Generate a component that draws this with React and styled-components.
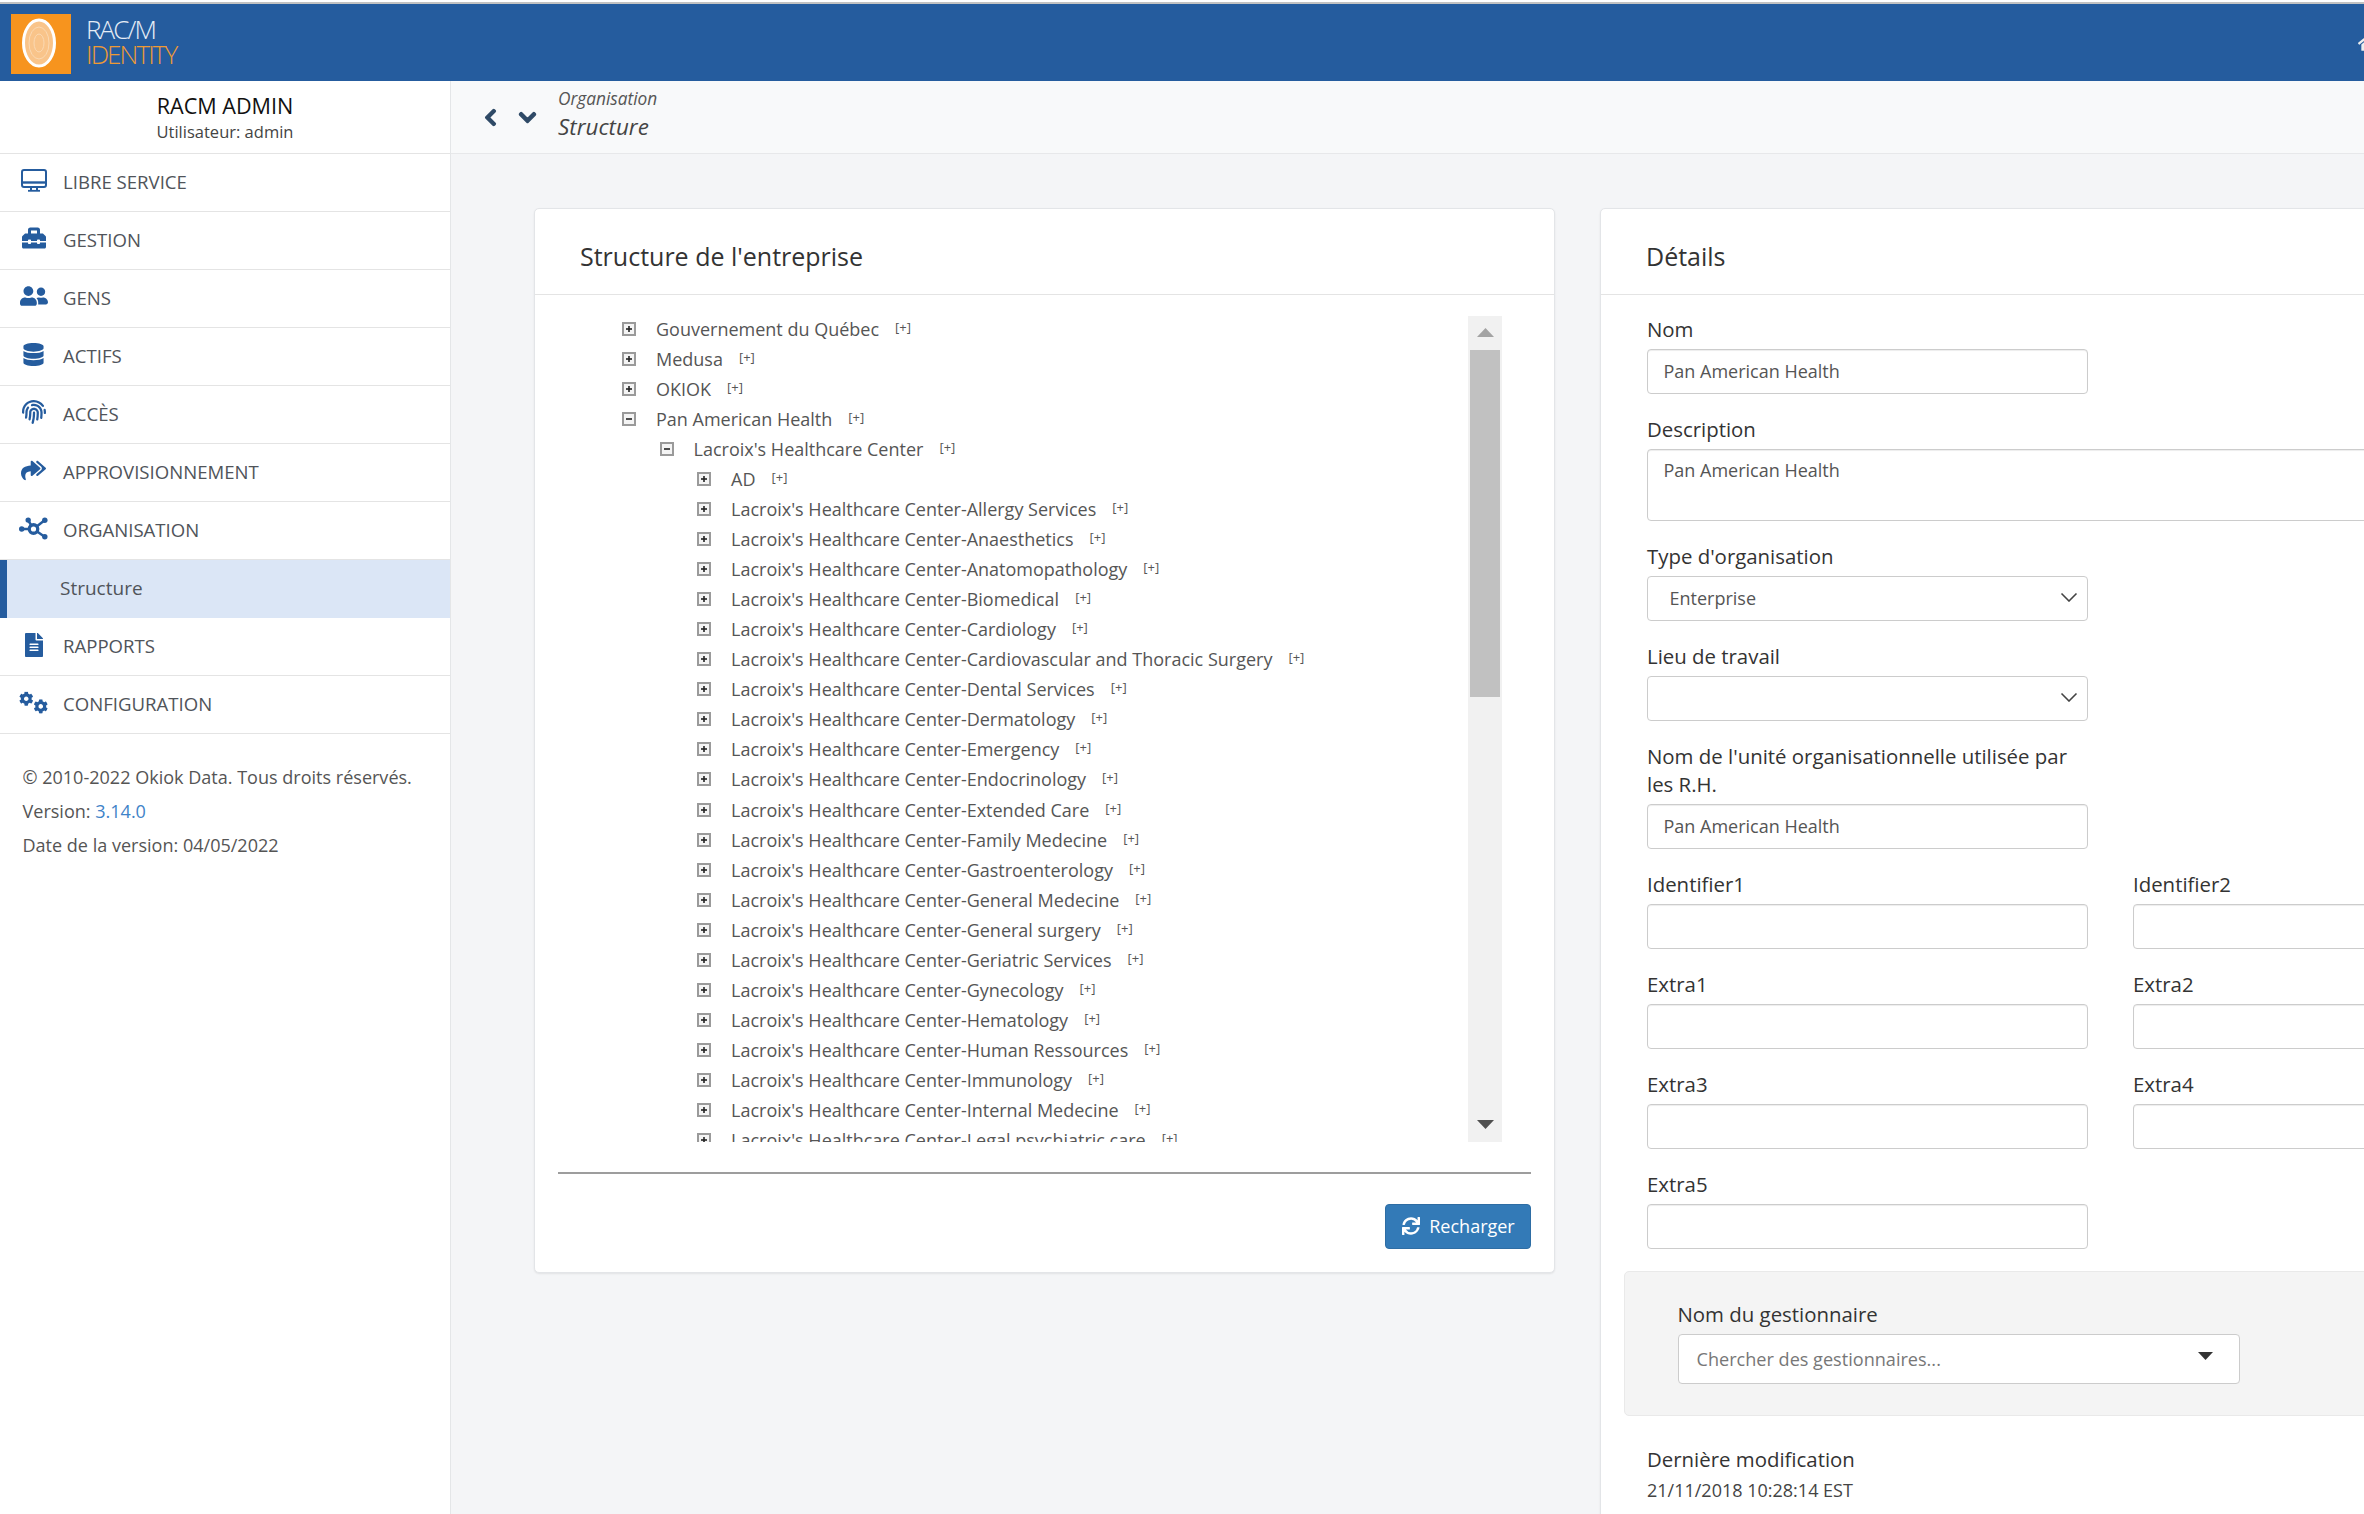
import styled, { createGlobalStyle } from "styled-components";
import {
  FaToolbox, FaUserFriends, FaDatabase, FaFingerprint, FaReplyAll,
  FaFileAlt, FaCog, FaChevronLeft, FaChevronDown, FaHome, FaSync,
} from "react-icons/fa";

const GlobalStyle = createGlobalStyle`
  html, body {
    margin: 0;
    padding: 0;
    width: 2364px;
    height: 1514px;
    overflow: hidden;
    background: #fff;
    font-family: "Open Sans", "Liberation Sans", sans-serif;
    font-size: 18px;
    color: #333;
  }
  * { box-sizing: border-box; }
`;

const blue = "#255c9e";

const Page = styled.div`
  width: 2364px;
  height: 1514px;
  overflow: hidden;
  display: flex;
  flex-direction: column;
`;

const TopBar = styled.header`
  height: 81px;
  flex: none;
  background: ${blue};
  border-top: 2px solid #fff;
  display: flex;
  align-items: center;
  justify-content: space-between;
  box-shadow: inset 0 2px 0 #c2c2c2;
  padding: 4px 0 0 11px;
`;

const Logo = styled.div`
  display: flex;
  align-items: center;
  gap: 15px;
`;

const LogoMark = styled.svg`
  width: 60px;
  height: 60px;
  display: block;
`;

const LogoText = styled.div`
  display: flex;
  flex-direction: column;
  font-weight: 300;
  font-size: 26px;
  line-height: 25px;
  letter-spacing: -1.9px;
  margin-top: -4px;
`;

const LogoLine = styled.span`
  color: ${(p) => p.$color};
`;

const HomeIcon = styled(FaHome)`
  font-size: 20px;
  color: #eee;
  margin-right: -14px;
  margin-top: -1px;
`;

const Body = styled.div`
  flex: 1;
  display: flex;
  min-height: 0;
`;

const Sidebar = styled.aside`
  width: 451px;
  flex: none;
  background: #fff;
  border-right: 1px solid #e4e6e8;
`;

const UserBox = styled.div`
  height: 72.5px;
  border-bottom: 1px solid #e4e4e4;
  text-align: center;
  padding-top: 11px;
`;

const UserName = styled.div`
  font-size: 21.6px;
  line-height: 28px;
  color: #111;
`;

const UserLogin = styled.div`
  font-size: 16.5px;
  line-height: 24px;
  color: #444;
`;

const NavRow = styled.div`
  height: 58.1px;
  display: flex;
  align-items: center;
  border-bottom: 1px solid #e4e4e4;
  font-size: 18.6px;
  font-weight: 500;
  color: #50545a;
  padding: 0 0 2px 19px;
`;

const NavIcon = styled.span`
  width: 29px;
  height: 26px;
  margin-right: 15px;
  margin-top: -2px;
  display: flex;
  align-items: center;
  justify-content: center;
  color: ${blue};
  font-size: ${(p) => p.$size || 24}px;
  transform: ${(p) => (p.$flip ? "scaleX(-1)" : "none")};
`;

const NavChild = styled.div`
  height: 58.1px;
  display: flex;
  align-items: center;
  background: #dbe6f6;
  border-left: 7px solid ${blue};
  padding: 0 0 3px 53px;
  font-size: 19px;
  color: #50545a;
`;

const SideFooter = styled.div`
  padding: 25.5px 22.5px 0;
  font-size: 18.05px;
  color: #555;
`;

const FooterLine = styled.div`
  height: 34px;
  line-height: 34px;
`;

const VersionLink = styled.a`
  color: #3f83c8;
`;

const Main = styled.main`
  flex: 1;
  min-width: 0;
  background: #f4f5f7;
`;

const Crumbs = styled.div`
  height: 72.5px;
  background: #f8f9fa;
  border-bottom: 1px solid #e7e8ea;
  display: flex;
  align-items: center;
  padding-left: 30px;
`;

const CrumbArrow = styled.span`
  display: flex;
  color: #2f4a66;
  font-size: ${(p) => p.$size}px;
  margin-right: ${(p) => p.$gap}px;
  margin-top: 1px;

  svg {
    stroke: currentColor;
    stroke-width: 36px;
  }
`;

const CrumbText = styled.div`
  font-style: italic;
  color: #555;
  margin-top: -6px;
`;

const CrumbTop = styled.div`
  font-size: 17.3px;
  line-height: 26px;
`;

const CrumbBottom = styled.div`
  font-size: 22.4px;
  line-height: 29px;
  color: #444;
`;

const Content = styled.div`
  display: flex;
  align-items: flex-start;
  gap: 45px;
  padding: 54px 0 0 83px;
`;

const Card = styled.section`
  flex: none;
  width: ${(p) => p.$width}px;
  background: #fff;
  border: 1px solid #e3e5e8;
  border-radius: 5px;
  box-shadow: 0 1px 2px rgba(0, 0, 0, 0.08);
`;

const CardHead = styled.h2`
  margin: 0;
  height: 86px;
  border-bottom: 1px solid #e4e4e4;
  padding-left: 45px;
  font-size: 25px;
  font-weight: 500;
  line-height: 94px;
  color: #333;
`;

const TreeBody = styled.div`
  padding: 21px 23px 23px;
`;

const TreeFrame = styled.div`
  display: flex;
  height: 826px;
  padding-right: 29px;
`;

const TreeList = styled.div`
  flex: 1;
  overflow: hidden;
  padding-left: 64px;
`;

const TreeRow = styled.div`
  height: 30.07px;
  display: flex;
  align-items: flex-start;
  padding-left: ${(p) => p.$level * 37.5}px;
  font-size: 18px;
  line-height: 26px;
  color: #555;
  white-space: nowrap;
`;

const TreeToggle = styled.svg`
  width: 14px;
  height: 14px;
  flex: none;
  margin: 6px 20px 0 0;
`;

const TreeAdd = styled.span`
  font-size: 13px;
  line-height: 22px;
  margin-left: 16px;
  color: #555;
`;

const Scrollbar = styled.div`
  width: 34px;
  flex: none;
  background: #f1f1f1;
  display: flex;
  flex-direction: column;
  align-items: center;
`;

const ScrollButton = styled.div`
  height: ${(p) => p.$height}px;
  flex: none;
  display: flex;
  align-items: center;
  justify-content: center;
`;

const ScrollArrow = styled.svg`
  width: 17px;
  height: 9px;
  display: block;
`;

const ScrollThumb = styled.div`
  width: 30px;
  height: 347px;
  flex: none;
  background: #c1c1c1;
`;

const ScrollRest = styled.div`
  flex: 1;
`;

const Rule = styled.hr`
  margin: 30px 0 0;
  border: 0;
  border-top: 2px solid #9d9d9d;
`;

const CardActions = styled.div`
  display: flex;
  justify-content: flex-end;
  margin-top: 30px;
`;

const ReloadButton = styled.button`
  height: 45px;
  width: 146px;
  border: 1px solid #2e6da4;
  border-radius: 4px;
  background: #337ab7;
  color: #fff;
  font: inherit;
  font-size: 18px;
  display: flex;
  align-items: center;
  justify-content: center;
  gap: 9px;
  padding: 0 0 0 1px;
`;

const DetailsBody = styled.div`
  padding: 21px 0 60px 46px;
`;

const FormRow = styled.div`
  display: flex;
  gap: 45px;
`;

const Field = styled.div`
  width: ${(p) => p.$width || 441}px;
  flex: none;
  margin-bottom: 22px;
`;

const Label = styled.label`
  display: block;
  font-size: 20.4px;
  font-weight: 500;
  line-height: 28px;
  margin: -1px 0 6px;
  color: #333;
`;

const Input = styled.input`
  display: block;
  width: 100%;
  height: 45px;
  border: 1px solid #ccc;
  border-radius: 4px;
  padding: 0 15.5px;
  font: inherit;
  font-size: 18px;
  color: #555;
  background: #fff;
  box-shadow: inset 0 1px 1px rgba(0, 0, 0, 0.075);
  outline: none;
`;

const TextArea = styled.textarea`
  display: block;
  width: 100%;
  height: 72px;
  border: 1px solid #ccc;
  border-radius: 4px;
  padding: 8px 15.5px;
  font: inherit;
  font-size: 18px;
  line-height: 25px;
  color: #555;
  background: #fff;
  box-shadow: inset 0 1px 1px rgba(0, 0, 0, 0.075);
  outline: none;
  resize: none;
`;

const SelectBox = styled.div`
  height: 45px;
  border: 1px solid #ccc;
  border-radius: 4px;
  background: #fff;
  display: flex;
  align-items: center;
  justify-content: space-between;
  padding: 0 9px 0 21.5px;
  font-size: 18px;
  color: #555;
`;

const Chevron = styled.svg`
  width: 18px;
  height: 10px;
  display: block;
  margin-top: -3px;
`;

const ManagerPanel = styled.div`
  margin: 1px 0 0 -23px;
  width: 1000px;
  height: 145px;
  background: #f4f4f4;
  border: 1px solid #e9e9e9;
  border-radius: 5px;
  padding: 29px 0 0 52.5px;
`;

const ManagerSelect = styled.div`
  width: 562.5px;
  height: 50px;
  border: 1px solid #ccc;
  border-radius: 4px;
  background: #fff;
  display: flex;
  align-items: center;
  justify-content: space-between;
  padding: 0 26px 0 18px;
  font-size: 18.1px;
  color: #777;
`;

const Caret = styled.svg`
  width: 15px;
  height: 8px;
  display: block;
  margin-top: -5px;
`;

const Stamp = styled.div`
  margin-top: 30px;
`;

const StampValue = styled.div`
  font-size: 18px;
  line-height: 28px;
  margin-top: -3px;
  color: #444;
`;

const departments = [
  "Allergy Services", "Anaesthetics", "Anatomopathology", "Biomedical", "Cardiology",
  "Cardiovascular and Thoracic Surgery", "Dental Services", "Dermatology", "Emergency",
  "Endocrinology", "Extended Care", "Family Medecine", "Gastroenterology", "General Medecine",
  "General surgery", "Geriatric Services", "Gynecology", "Hematology", "Human Ressources",
  "Immunology", "Internal Medecine", "Legal psychiatric care",
];

const treeRows = [
  { level: 0, name: "Gouvernement du Québec" },
  { level: 0, name: "Medusa" },
  { level: 0, name: "OKIOK" },
  { level: 0, name: "Pan American Health", open: true },
  { level: 1, name: "Lacroix's Healthcare Center", open: true },
  { level: 2, name: "AD" },
  ...departments.map((d) => ({ level: 2, name: `Lacroix's Healthcare Center-${d}` })),
];

const DesktopIcon = () => (
  <svg width="26" height="23" viewBox="0 0 26 23" fill="none" stroke="currentColor">
    <rect x="1" y="1" width="24" height="17" rx="2" strokeWidth="2" />
    <path d="M1 13.5h24" strokeWidth="2.4" />
    <path d="M10 18v3M16 18v3" strokeWidth="2" />
    <path d="M7 21.8h12" strokeWidth="1.8" />
  </svg>
);

const OrgIcon = () => (
  <svg width="30" height="24" viewBox="0 0 30 24" fill="currentColor">
    <g stroke="currentColor" strokeWidth="2.6">
      <line x1="15" y1="12" x2="3" y2="12" />
      <line x1="15" y1="12" x2="9.5" y2="3" />
      <line x1="15" y1="12" x2="26.5" y2="3" />
      <line x1="15" y1="12" x2="26.5" y2="20" />
    </g>
    <circle cx="15" cy="12" r="4.4" fill="#fff" stroke="currentColor" strokeWidth="3.4" />
    <circle cx="2.8" cy="12" r="2.8" />
    <circle cx="9.5" cy="2.8" r="2.8" />
    <circle cx="26.7" cy="3" r="2.8" />
    <circle cx="26.7" cy="20" r="2.8" />
  </svg>
);

const CogsIcon = () => (
  <svg width="30" height="24" viewBox="0 0 30 24" fill="currentColor">
    <FaCog x="0" y="0" size="15" />
    <FaCog x="15" y="8" size="15" />
  </svg>
);

const navTop = [
  { label: "LIBRE SERVICE", icon: <DesktopIcon /> },
  { label: "GESTION", icon: <FaToolbox /> },
  { label: "GENS", icon: <FaUserFriends />, size: 28 },
  { label: "ACTIFS", icon: <FaDatabase />, size: 23 },
  { label: "ACCÈS", icon: <FaFingerprint /> },
  { label: "APPROVISIONNEMENT", icon: <FaReplyAll />, flip: true, size: 25 },
  { label: "ORGANISATION", icon: <OrgIcon /> },
];

const navBottom = [
  { label: "RAPPORTS", icon: <FaFileAlt /> },
  { label: "CONFIGURATION", icon: <CogsIcon /> },
];

const Toggle = ({ open }) => (
  <TreeToggle viewBox="0 0 14 14">
    <rect x="1" y="1" width="12" height="12" fill="#f4f4f4" stroke="#9a9a9a" strokeWidth="2" />
    <path d="M4 7h6" stroke="#222" strokeWidth="1.6" />
    {!open && <path d="M7 4v6" stroke="#222" strokeWidth="1.6" />}
  </TreeToggle>
);

const Nav = ({ item }) => (
  <NavRow>
    <NavIcon $size={item.size} $flip={item.flip}>{item.icon}</NavIcon>
    {item.label}
  </NavRow>
);

const SelectChevron = () => (
  <Chevron viewBox="0 0 18 10">
    <path d="M1.5 1.5 9 9l7.5-7.5" fill="none" stroke="#444" strokeWidth="1.6" />
  </Chevron>
);

const TextField = ({ label, value = "" }) => (
  <Field>
    <Label>{label}</Label>
    <Input defaultValue={value} readOnly />
  </Field>
);

export default function App() {
  return (
    <Page>
      <GlobalStyle />
      <TopBar>
        <Logo>
          <LogoMark viewBox="0 0 60 60">
            <rect width="60" height="60" fill="#f7941e" />
            <ellipse cx="28" cy="29" rx="15.5" ry="23" fill="#f9c48a" stroke="#fff" strokeWidth="3" />
            <ellipse cx="28" cy="29" rx="10" ry="16" fill="none" stroke="#fbd9b2" strokeWidth="1" />
            <ellipse cx="28" cy="29" rx="5" ry="9" fill="none" stroke="#fbd9b2" strokeWidth="1" />
          </LogoMark>
          <LogoText>
            <LogoLine $color="#e6edf6">RAC/M</LogoLine>
            <LogoLine $color="#ee9a35">IDENTITY</LogoLine>
          </LogoText>
        </Logo>
        <HomeIcon />
      </TopBar>
      <Body>
        <Sidebar>
          <UserBox>
            <UserName>RACM ADMIN</UserName>
            <UserLogin>Utilisateur: admin</UserLogin>
          </UserBox>
          {navTop.map((item) => <Nav key={item.label} item={item} />)}
          <NavChild>Structure</NavChild>
          {navBottom.map((item) => <Nav key={item.label} item={item} />)}
          <SideFooter>
            <FooterLine>© 2010-2022 Okiok Data. Tous droits réservés.</FooterLine>
            <FooterLine>Version: <VersionLink>3.14.0</VersionLink></FooterLine>
            <FooterLine>Date de la version: 04/05/2022</FooterLine>
          </SideFooter>
        </Sidebar>
        <Main>
          <Crumbs>
            <CrumbArrow $size={19} $gap={18}><FaChevronLeft /></CrumbArrow>
            <CrumbArrow $size={19} $gap={21}><FaChevronDown /></CrumbArrow>
            <CrumbText>
              <CrumbTop>Organisation</CrumbTop>
              <CrumbBottom>Structure</CrumbBottom>
            </CrumbText>
          </Crumbs>
          <Content>
            <Card $width={1021}>
              <CardHead>Structure de l'entreprise</CardHead>
              <TreeBody>
                <TreeFrame>
                  <TreeList>
                    {treeRows.map((row) => (
                      <TreeRow key={row.name} $level={row.level}>
                        <Toggle open={row.open} />
                        {row.name}
                        <TreeAdd>[+]</TreeAdd>
                      </TreeRow>
                    ))}
                  </TreeList>
                  <Scrollbar>
                    <ScrollButton $height={34}>
                      <ScrollArrow viewBox="0 0 17 9"><path d="M8.5 0 17 9H0z" fill="#a3a3a3" /></ScrollArrow>
                    </ScrollButton>
                    <ScrollThumb />
                    <ScrollRest />
                    <ScrollButton $height={34}>
                      <ScrollArrow viewBox="0 0 17 9"><path d="M0 0h17L8.5 9z" fill="#505050" /></ScrollArrow>
                    </ScrollButton>
                  </Scrollbar>
                </TreeFrame>
                <Rule />
                <CardActions>
                  <ReloadButton><FaSync />Recharger</ReloadButton>
                </CardActions>
              </TreeBody>
            </Card>
            <Card $width={1100}>
              <CardHead>Détails</CardHead>
              <DetailsBody>
                <TextField label="Nom" value="Pan American Health" />
                <Field $width={927}>
                  <Label>Description</Label>
                  <TextArea defaultValue="Pan American Health" readOnly />
                </Field>
                <Field>
                  <Label>Type d'organisation</Label>
                  <SelectBox>Enterprise<SelectChevron /></SelectBox>
                </Field>
                <Field>
                  <Label>Lieu de travail</Label>
                  <SelectBox><span /><SelectChevron /></SelectBox>
                </Field>
                <TextField label="Nom de l'unité organisationnelle utilisée par les R.H." value="Pan American Health" />
                <FormRow>
                  <TextField label="Identifier1" />
                  <TextField label="Identifier2" />
                </FormRow>
                <FormRow>
                  <TextField label="Extra1" />
                  <TextField label="Extra2" />
                </FormRow>
                <FormRow>
                  <TextField label="Extra3" />
                  <TextField label="Extra4" />
                </FormRow>
                <TextField label="Extra5" />
                <ManagerPanel>
                  <Label>Nom du gestionnaire</Label>
                  <ManagerSelect>
                    Chercher des gestionnaires...
                    <Caret viewBox="0 0 15 8"><path d="M0 0h15L7.5 8z" fill="#333" /></Caret>
                  </ManagerSelect>
                </ManagerPanel>
                <Stamp>
                  <Label>Dernière modification</Label>
                  <StampValue>21/11/2018 10:28:14 EST</StampValue>
                </Stamp>
              </DetailsBody>
            </Card>
          </Content>
        </Main>
      </Body>
    </Page>
  );
}
